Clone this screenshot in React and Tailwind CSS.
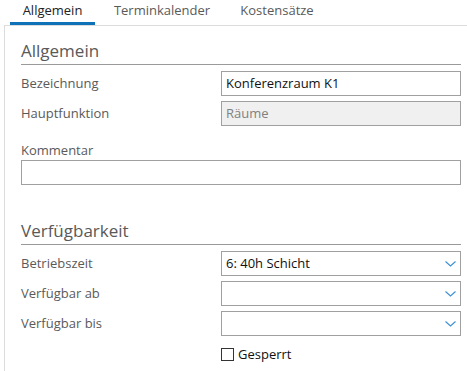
import React from "react"

function Chevron() {
  return (
    <svg width="11" height="6" viewBox="0 0 11 6" className="text-[#3c8fd6]">
      <path d="M0.5 0.5 L5.5 5 L10.5 0.5" fill="none" stroke="currentColor" strokeWidth="1.1" />
    </svg>
  )
}

function Field({ label, children, className = "" }) {
  return (
    <div className={`flex items-center ${className}`}>
      <span className="w-[200px] text-[13px] text-[#5a5a5a]">{label}</span>
      {children}
    </div>
  )
}

function Select({ value }) {
  return (
    <div className="flex-1 h-[25px] border border-[#a0a0a0] bg-white flex items-center justify-between pl-[4px] pr-[4px] text-[13px] text-[#111]">
      <span>{value}</span>
      <Chevron />
    </div>
  )
}

export default function App() {
  const tabs = ["Allgemein", "Terminkalender", "Kostensätze"]

  return (
    <div className="w-[467px] h-[371px] bg-white overflow-hidden font-['Open_Sans',sans-serif]">
      {/* Tabs */}
      <div className="flex h-[25px] pl-[10px]">
        {tabs.map((t, i) => (
          <div
            key={t}
            className={`relative flex items-start justify-center text-[13px] pt-[1px] ${
              i === 0 ? "w-[85px] text-[#222]" : "text-[#5a5a5a]"
            } ${i === 1 ? "w-[128px] pl-[6px]" : ""} ${i === 2 ? "w-[108px]" : ""}`}
          >
            {t}
            {i === 0 && <div className="absolute left-0 right-0 bottom-0 h-[3px] bg-[#0f72b8]" />}
          </div>
        ))}
      </div>

      {/* Panel */}
      <div className="ml-[4px] border-l border-t border-[#dcdcdc] h-[346px] pl-[16px] pr-[6px]">
        <div className="pt-[14px]">
          <div className="text-[17px] text-[#595959] leading-[22px] pb-[2px] border-b border-[#9a9a9a]">
            Allgemein
          </div>

          <Field label="Bezeichnung" className="mt-[6px]">
            <div className="flex-1 h-[25px] border border-[#a0a0a0] bg-white flex items-center pl-[4px] text-[13px] text-[#111]">
              Konferenzraum K1
            </div>
          </Field>
          <Field label="Hauptfunktion" className="mt-[5px]">
            <div className="flex-1 h-[25px] border border-[#a0a0a0] bg-[#f0f0f0] flex items-center pl-[4px] text-[13px] text-[#808080]">
              Räume
            </div>
          </Field>

          <div className="mt-[15px] text-[13px] text-[#5a5a5a] leading-[18px]">Kommentar</div>
          <div className="mt-[1px] h-[25px] border border-[#a0a0a0] bg-white" />

          <div className="mt-[35px] text-[17px] text-[#595959] leading-[22px] pb-[2px] border-b border-[#9a9a9a]">
            Verfügbarkeit
          </div>

          <Field label="Betriebszeit" className="mt-[6px]">
            <Select value="6: 40h Schicht" />
          </Field>
          <Field label="Verfügbar ab" className="mt-[5px]">
            <Select value="" />
          </Field>
          <Field label="Verfügbar bis" className="mt-[5px]">
            <Select value="" />
          </Field>

          <div className="mt-[9px] ml-[200px] flex items-center gap-[4px] text-[13px] text-[#111]">
            <span className="w-[13px] h-[13px] border border-[#333] bg-white" />
            Gesperrt
          </div>
        </div>
      </div>
    </div>
  )
}
